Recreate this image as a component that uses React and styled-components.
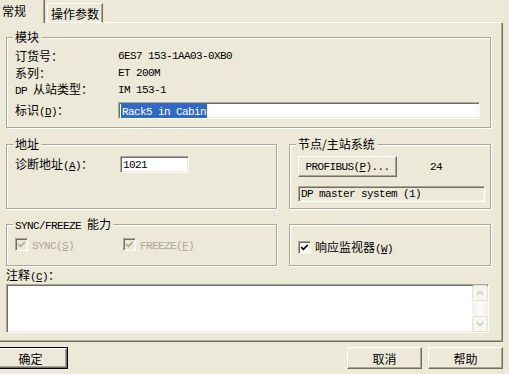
import styled, { createGlobalStyle } from "styled-components";

const GlobalStyle = createGlobalStyle`
  html, body {
    margin: 0;
    padding: 0;
    background: #ece9d8;
  }
  body {
    width: 509px;
    height: 374px;
    overflow: hidden;
    font-family: "Noto Sans CJK SC", "Liberation Sans", sans-serif;
    font-size: 12px;
    color: #000;
  }
`;

const Window = styled.div`
  width: 509px;
  height: 374px;
  display: flex;
  flex-direction: column;
`;

const TabStrip = styled.div`
  display: flex;
  align-items: flex-end;
  width: 503px;
  height: 23px;
`;

const Tab = styled.div`
  box-sizing: border-box;
  width: ${(p) => p.$w}px;
  height: ${(p) => (p.$active ? 23 : 20)}px;
  margin-right: 2px;
  padding: ${(p) => (p.$active ? "0 0 1px 2px" : "1px 0 0 3px")};
  border-top: ${(p) => (p.$active ? "none" : "1px solid #fff")};
  border-left: ${(p) => (p.$active ? "none" : "1px solid #fff")};
  border-bottom: ${(p) => (p.$active ? "none" : "1px solid #fff")};
  border-right: 1px solid #716f64;
  box-shadow: inset -1px 0 #aca899;
  display: flex;
  align-items: center;
  line-height: 14px;
  white-space: nowrap;
`;

const TabLine = styled.div`
  flex: 1;
  height: 1px;
  background: #fff;
`;

const Panel = styled.div`
  box-sizing: border-box;
  width: 503px;
  height: 319px;
  padding: 7px 11px 0 6px;
  border-right: 1px solid #716f64;
  border-bottom: 1px solid #716f64;
  box-shadow: inset -1px -1px #aca899;
  display: flex;
  flex-direction: column;
`;

const Group = styled.fieldset`
  box-sizing: border-box;
  min-width: 0;
  margin: ${(p) => p.$mt || 0}px 0 0;
  padding: ${(p) => p.$pt || 0}px 8px ${(p) => p.$pb || 0}px;
  border: 1px solid #aca899;
  box-shadow: 1px 1px 0 #fff, inset 1px 1px 0 #fff;
`;

const Legend = styled.legend`
  margin-left: -2px;
  padding: 0 2px;
  height: 14px;
  line-height: 14px;
  background: #ece9d8;
  white-space: nowrap;
`;

const Row = styled.div`
  display: flex;
  align-items: center;
  height: ${(p) => p.$h || 17}px;
  margin-top: ${(p) => p.$mt || 0}px;
  white-space: nowrap;
`;

const Label = styled.span`
  flex: none;
  width: ${(p) => p.$w}px;
  line-height: 14px;
`;

const Lat = styled.span`
  font-family: "Liberation Mono", monospace;
  font-size: 11px;
  letter-spacing: -0.6px;
  color: inherit;
`;

const Pair = styled.div`
  display: grid;
  grid-template-columns: 271px 202px;
  column-gap: 12px;
  margin-top: ${(p) => p.$mt}px;
`;

const Field = styled.div`
  box-sizing: border-box;
  flex: none;
  width: ${(p) => p.$w}px;
  height: ${(p) => p.$h || 17}px;
  margin-top: ${(p) => p.$mt || 0}px;
  padding: 0 2px;
  border: 1px solid;
  border-color: #aca899 #fff #fff #aca899;
  box-shadow: inset 1px 1px #716f64, inset -1px -1px #f1efe2;
  background: ${(p) => (p.$readOnly ? "#ece9d8" : "#fff")};
  display: flex;
  align-items: center;
  white-space: nowrap;
  overflow: hidden;
`;

const Selected = styled.span`
  padding: 0 1px;
  line-height: 13px;
  background: #316ac5;
  color: #fff;
`;

const Button = styled.button`
  box-sizing: border-box;
  flex: none;
  width: ${(p) => p.$w}px;
  height: ${(p) => p.$h || 22}px;
  margin: 0 0 0 ${(p) => p.$ml || 0}px;
  padding: 0;
  font: inherit;
  color: #000;
  background: #ece9d8;
  border: 1px solid;
  border-color: ${(p) => (p.$default ? "#000" : "#fff #716f64 #716f64 #fff")};
  box-shadow: ${(p) =>
    p.$default
      ? "inset 1px 1px #fff, inset -1px -1px #716f64, inset -2px -2px #aca899"
      : "inset -1px -1px #aca899"};
  display: flex;
  align-items: center;
  justify-content: center;
  white-space: nowrap;
`;

const Number = styled(Lat)`
  margin-left: 33px;
`;

const Check = styled.label`
  display: flex;
  align-items: center;
  gap: 4px;
  width: ${(p) => (p.$w ? `${p.$w}px` : "auto")};
  color: ${(p) => (p.$disabled ? "#aca899" : "#000")};
  line-height: 14px;
`;

const Box = styled.span`
  box-sizing: border-box;
  flex: none;
  width: 13px;
  height: 13px;
  border: 1px solid;
  border-color: #aca899 #fff #fff #aca899;
  box-shadow: inset 1px 1px #716f64, inset -1px -1px #f1efe2;
  background: ${(p) => (p.$disabled ? "#ece9d8" : "#fff")};
  display: flex;
  align-items: center;
  justify-content: center;
`;

const Caption = styled.div`
  height: 14px;
  margin-top: 2px;
  line-height: 14px;
  white-space: nowrap;
`;

const Memo = styled(Field)`
  justify-content: flex-end;
  align-items: stretch;
  padding: 0;
`;

const Scrollbar = styled.div`
  width: 16px;
  display: flex;
  flex-direction: column;
`;

const ScrollButton = styled.div`
  box-sizing: border-box;
  height: 16px;
  border: 1px solid #e2e0d5;
  border-radius: 2px;
  background: #f6f5f0;
  display: flex;
  align-items: center;
  justify-content: center;
`;

const Track = styled.div`
  flex: 1;
  background: linear-gradient(to right, #f1f0ea, #fdfdfb 50%, #f1f0ea);
`;

const Footer = styled.div`
  width: 503px;
  margin-top: 5px;
  display: flex;
  justify-content: space-between;
`;

const FooterRight = styled.div`
  display: flex;
  gap: 6px;
`;

const Tick = ({ color }) => (
  <svg width="9" height="9" viewBox="0 0 9 9">
    <polyline points="1.2,4.2 3.4,6.4 7.8,2" fill="none" stroke={color} strokeWidth="1.7" />
  </svg>
);

const Chevron = ({ up }) => (
  <svg width="8" height="6" viewBox="0 0 8 6">
    <polyline
      points={up ? "1,4.5 4,1.5 7,4.5" : "1,1.5 4,4.5 7,1.5"}
      fill="none"
      stroke="#c9c6ba"
      strokeWidth="1.5"
    />
  </svg>
);

const CheckItem = ({ checked, disabled, width, children }) => (
  <Check $disabled={disabled} $w={width}>
    <Box $disabled={disabled}>{checked && <Tick color={disabled ? "#aca899" : "#000"} />}</Box>
    <span>{children}</span>
  </Check>
);

const App = () => {
  return (
    <Window>
      <GlobalStyle />
      <TabStrip>
        <Tab $active $w={45}>常规</Tab>
        <Tab $w={56}>操作参数</Tab>
        <TabLine />
      </TabStrip>
      <Panel>
        <Group $pt={3} $pb={8}>
          <Legend>模块</Legend>
          <Row>
            <Label $w={103}>订货号：</Label>
            <Lat>6ES7 153-1AA03-0XB0</Lat>
          </Row>
          <Row>
            <Label $w={103}>系列：</Label>
            <Lat>ET 200M</Lat>
          </Row>
          <Row>
            <Label $w={103}>
              <Lat>DP </Lat>从站类型：
            </Label>
            <Lat>IM 153-1</Lat>
          </Row>
          <Row $mt={4}>
            <Label $w={103}>
              标识<Lat>(<u>D</u>)</Lat>：
            </Label>
            <Field $w={362}>
              <Selected>
                <Lat>Rack5 in Cabin</Lat>
              </Selected>
            </Field>
          </Row>
        </Group>

        <Pair $mt={9}>
          <Group $pt={5}>
            <Legend>地址</Legend>
            <Row>
              <Label $w={105}>
                诊断地址<Lat>(<u>A</u>)</Lat>：
              </Label>
              <Field $w={69}>
                <Lat>1021</Lat>
              </Field>
            </Row>
          </Group>
          <Group $pt={5} $pb={6}>
            <Legend>节点/主站系统</Legend>
            <Row $h={21}>
              <Button $w={99} $h={21}>
                <Lat>
                  PROFIBUS(<u>P</u>)...
                </Lat>
              </Button>
              <Number>24</Number>
            </Row>
            <Field $w={187} $h={16} $mt={9} $readOnly>
              <Lat>DP master system (1)</Lat>
            </Field>
          </Group>
        </Pair>

        <Pair $mt={8}>
          <Group $pt={6} $pb={13}>
            <Legend>
              <Lat>SYNC/FREEZE </Lat>能力
            </Legend>
            <Row $h={15}>
              <CheckItem checked disabled width={108}>
                <Lat>
                  SYNC(<u>S</u>)
                </Lat>
              </CheckItem>
              <CheckItem checked disabled>
                <Lat>
                  FREEZE(<u>F</u>)
                </Lat>
              </CheckItem>
            </Row>
          </Group>
          <Group $mt={7} $pt={15}>
            <Row $h={15}>
              <CheckItem checked>
                响应监视器<Lat>(<u>W</u>)</Lat>
              </CheckItem>
            </Row>
          </Group>
        </Pair>

        <Caption>
          注释<Lat>(<u>C</u>)</Lat>：
        </Caption>
        <Memo $w={483} $h={49} $mt={2}>
          <Scrollbar>
            <ScrollButton>
              <Chevron up />
            </ScrollButton>
            <Track />
            <ScrollButton>
              <Chevron />
            </ScrollButton>
          </Scrollbar>
        </Memo>
      </Panel>
      <Footer>
        <Button $default $w={75} $ml={-7}>确定</Button>
        <FooterRight>
          <Button $w={75}>取消</Button>
          <Button $w={75}>帮助</Button>
        </FooterRight>
      </Footer>
    </Window>
  );
};

export default App;
